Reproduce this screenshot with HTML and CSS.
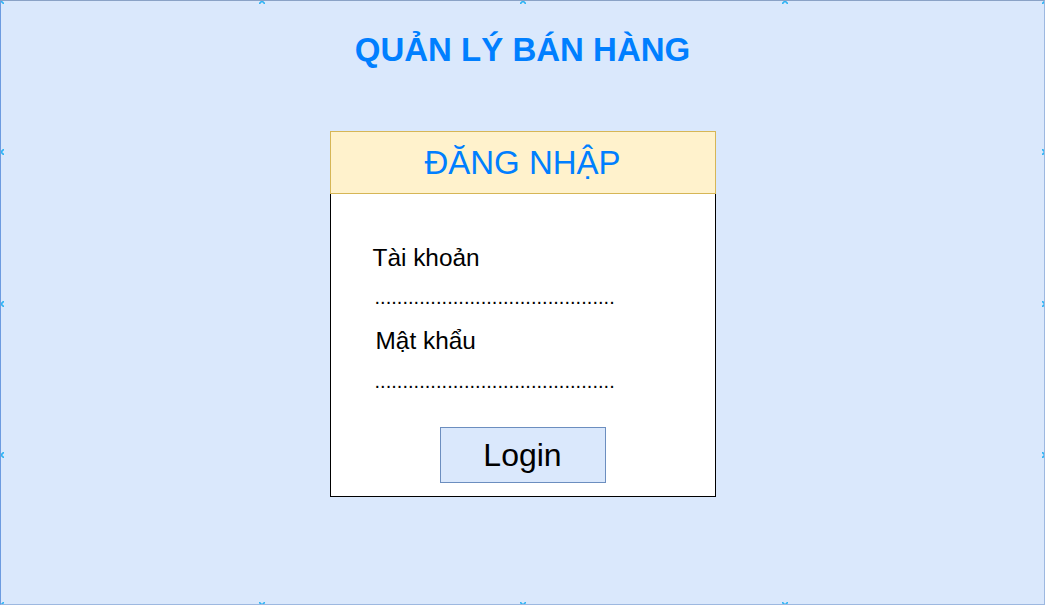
FILE: index.html
```html
<!DOCTYPE html>
<html lang="vi">
<head>
<meta charset="utf-8">
<title>Quản lý bán hàng</title>
<link rel="stylesheet" href="styles.css">
</head>
<body>
<div class="frame">
  <h1 class="title">QUẢN LÝ BÁN HÀNG</h1>
  <div class="card">
    <div class="card-head">ĐĂNG NHẬP</div>
    <div class="card-body">
      <div class="label">Tài khoản</div>
      <div class="dots">...........................................</div>
      <div class="label label-2">Mật khẩu</div>
      <div class="dots dots-2">...........................................</div>
      <div class="btn-row"><div class="btn">Login</div></div>
    </div>
  </div>

  <svg class="mark" style="left:-3px;top:-3px" viewBox="0 0 6 6"><path d="M0 0L6 6M6 0L0 6"/></svg>
  <svg class="mark" style="left:258px;top:-3px" viewBox="0 0 6 6"><path d="M0 0L6 6M6 0L0 6"/></svg>
  <svg class="mark" style="left:519px;top:-3px" viewBox="0 0 6 6"><path d="M0 0L6 6M6 0L0 6"/></svg>
  <svg class="mark" style="left:781px;top:-3px" viewBox="0 0 6 6"><path d="M0 0L6 6M6 0L0 6"/></svg>
  <svg class="mark" style="left:1041px;top:-3px" viewBox="0 0 6 6"><path d="M0 0L6 6M6 0L0 6"/></svg>
  <svg class="mark" style="left:-3px;top:148px" viewBox="0 0 6 6"><path d="M0 0L6 6M6 0L0 6"/></svg>
  <svg class="mark" style="left:-3px;top:300px" viewBox="0 0 6 6"><path d="M0 0L6 6M6 0L0 6"/></svg>
  <svg class="mark" style="left:-3px;top:451px" viewBox="0 0 6 6"><path d="M0 0L6 6M6 0L0 6"/></svg>
  <svg class="mark" style="left:1041px;top:148px" viewBox="0 0 6 6"><path d="M0 0L6 6M6 0L0 6"/></svg>
  <svg class="mark" style="left:1041px;top:300px" viewBox="0 0 6 6"><path d="M0 0L6 6M6 0L0 6"/></svg>
  <svg class="mark" style="left:1041px;top:451px" viewBox="0 0 6 6"><path d="M0 0L6 6M6 0L0 6"/></svg>
  <svg class="mark" style="left:-3px;top:601px" viewBox="0 0 6 6"><path d="M0 0L6 6M6 0L0 6"/></svg>
  <svg class="mark" style="left:258px;top:601px" viewBox="0 0 6 6"><path d="M0 0L6 6M6 0L0 6"/></svg>
  <svg class="mark" style="left:519px;top:601px" viewBox="0 0 6 6"><path d="M0 0L6 6M6 0L0 6"/></svg>
  <svg class="mark" style="left:781px;top:601px" viewBox="0 0 6 6"><path d="M0 0L6 6M6 0L0 6"/></svg>
</div>
</body>
</html>
```
FILE: styles.css
```css
html, body {
  margin: 0;
  padding: 0;
  width: 1045px;
  height: 605px;
  overflow: hidden;
  background: #ffffff;
  font-family: "Liberation Sans", Arial, sans-serif;
}

.frame {
  position: relative;
  box-sizing: border-box;
  width: 1045px;
  height: 605px;
  background: #dae8fc;
  border-top: 1px solid #8aa2c6;
  border-left: 1px solid #6c9be0;
  border-right: 1px solid #9db8e0;
  border-bottom: 1px solid #9db8e0;
  display: flex;
  flex-direction: column;
  align-items: center;
  overflow: hidden;
}

.title {
  margin: 30px 0 0 0;
  height: 38px;
  line-height: 38px;
  font-size: 33px;
  font-weight: bold;
  color: #007fff;
  text-align: center;
}

.card {
  margin-top: 62px;
  width: 386px;
  display: flex;
  flex-direction: column;
}

.card-head {
  box-sizing: border-box;
  height: 63px;
  background: #fff2cc;
  border: 1px solid #d6b656;
  color: #007fff;
  font-size: 33px;
  line-height: 61px;
  text-align: center;
}

.card-body {
  box-sizing: border-box;
  height: 303px;
  background: #ffffff;
  border: 1px solid #000000;
  border-top: none;
  padding: 50px 0 0 42px;
  display: flex;
  flex-direction: column;
}

.label {
  font-size: 24.4px;
  line-height: 28px;
  color: #000000;
}

.label-2 {
  margin-top: 18px;
  margin-left: 3px;
}

.dots {
  margin-top: 13px;
  margin-left: 2px;
  font-size: 20px;
  line-height: 24px;
  color: #000000;
  letter-spacing: 0.03px;
}

.dots-2 {
  margin-top: 14px;
}

.btn-row {
  margin-top: 34px;
  margin-left: -42px;
  display: flex;
  justify-content: center;
}

.btn {
  box-sizing: border-box;
  width: 166px;
  height: 56px;
  background: #dae8fc;
  border: 1px solid #6c8ebf;
  font-size: 32px;
  line-height: 54px;
  text-align: center;
  color: #000000;
}

.mark {
  position: absolute;
  width: 6px;
  height: 6px;
  stroke: #2fb4f5;
  stroke-width: 1.6;
  fill: none;
}
```
